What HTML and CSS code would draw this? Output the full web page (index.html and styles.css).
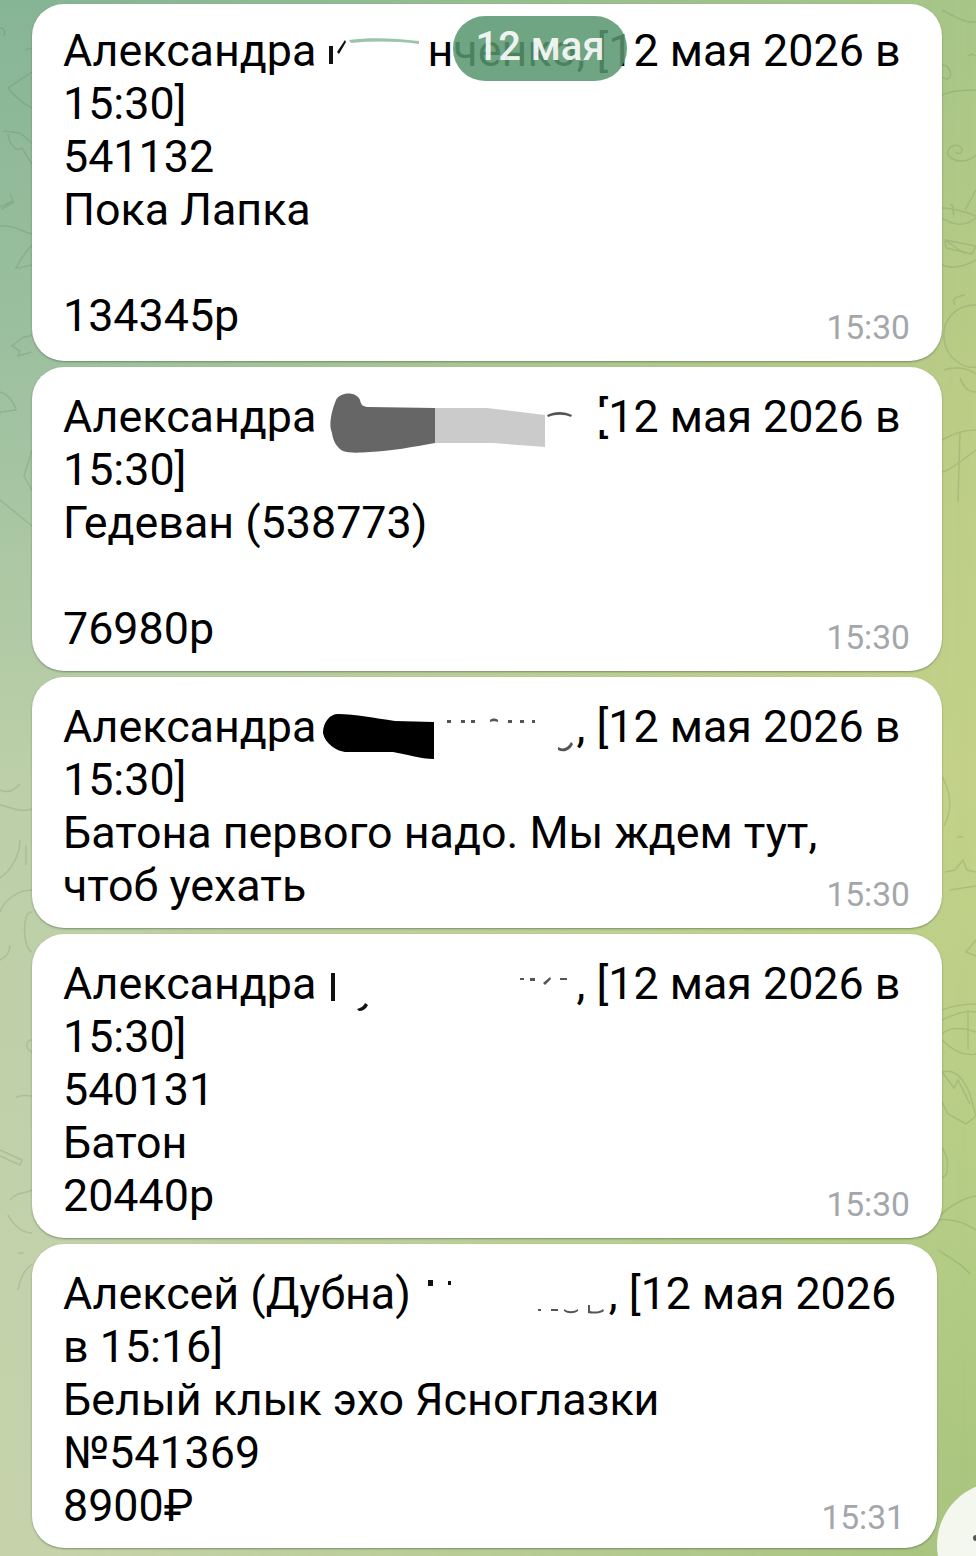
FILE: index.html
```html
<!DOCTYPE html>
<html lang="ru">
<head>
  <meta charset="UTF-8" />
  <title>Чат</title>
  <link rel="stylesheet" href="styles.css">
</head>
<body>
  <div class="chat">
    <svg class="doodles" viewBox="0 0 976 1556" aria-hidden="true">
      <!-- left strip, top to bottom -->
      <path d="M0 28c5 0 6 6 3 8M25 50c3-2 7-2 8 0M32 72L8 88c6 8 16 16 24 20M3 131l17 2 12 10M8 134c2 12 8 18 14 14l10 16M0 207l12-6-10 8 12-7-4-8M0 226c12-2 22 6 32 8M32 245c-8 8-12 16-16 23 6 0 10-2 16-3M32 335l-10 3-10 8 8 5-2 5 14-4M0 392c8 2 14 10 16 18l-16 2-2 12M32 450l-8 26 8 14M0 500l32 26"/>
      <path d="M0 790c8 4 14 0 20-6M0 805c10 2 22 8 32 4M20 840c0 14-8 30-20 38M26 845v20M0 912c4-12 18-22 32-22M32 912c-10-2-10 36 0 40M0 960c6-2 10-8 10-15M32 1040c-6 0-8 8 0 12M16 1098c4-4 10-2 16-2M0 1150l22 10-2 5-20-9M10 1200c6-8 14-6 22-10M8 1215c8 14 16 18 24 18M18 1253h6M18 1290c2-12 6-20 14-26"/>
      <!-- right strip, top to bottom -->
      <path d="M942 10c12 6 24 14 34 12M968 56c2-2 6-2 7 0M942 65c6 0 10 6 8 12-2 3-6 2-8 0M942 95c14-6 24-4 34-5M976 155c-8 8-22 8-28 0-2-8 10-14 14-6 1 4-4 6-6 3M976 190l-11 20M950 205c4-2 2 6 4 10M942 208c12 0 24 4 34 8M942 218c12 8 24 8 34 0M945 240l31 6-4 8-26-6zM945 240l20 14M942 265c10 4 22 2 34-5"/>
      <path d="M976 305c-20 0-34 14-32 34 2 18 18 30 32 28M955 305c-4-6 0-8 10-10M944 370c10-4 24-2 32 4M960 378c4 10 8 14 16 14M942 440c10-6 22-10 34-10M960 432l-2 70M942 472c10-2 22-14 34-22"/>
      <path d="M942 776c8 16 12 30 2 50M957 838c2-2 5-2 6 0M945 872l10-2 8-10 4 10 9 2M950 890l26-4M976 940l-10 12 10 4M942 1010c10-4 24-6 34-6M942 1020c12-6 24-10 34-8M942 1034c8-8 24-6 34-2M942 1040c12 12 24 16 34 14M968 1010v40M942 1072c14-4 22 8 28 22l6 22-10 8-18-10-8-16M942 1072l12 16 4-8 12 24M938 1145c8 4 12 18 8 30l-8 6M936 1220c10-12 26-22 40-24M936 1220c14-2 28 2 40 10M938 1250c12 8 24 14 32 24"/>
    </svg>

    <div class="bubble bubble-first">
      Александра <svg class="blot blot-a" viewBox="2 0 100 53" aria-hidden="true"><path class="ink" d="M4 22h4v18H4zM12 28l8-12 1 2-7 12z"/><path class="smear" d="M24 16c20-3 46-2 70 1v3c-24-3-46-3-68-1z"/></svg>нченко, [12 мая 2026 в<br>
      15:30]<br>
      541132<br>
      Пока Лапка<br>
      <br>
      134345р
      <span class="time">15:30</span>
    </div>

    <div class="bubble">
      Александра <svg class="blot blot-b" viewBox="1 0 269 53" aria-hidden="true"><path class="gray-light" d="M109 18h52l58 7v32l-52-4h-58z"/><path class="gray-dark" d="M6 43C2 34 6 20 10 10c4-8 20-9 24 0 1 5 3 7 9 7l66 1v35c-22 4-44 8-65 9-12 1-22 1-27-1-6-3-10-10-11-18z"/><path class="fragment" d="M221 25c8-4 17-4 25 0l-1 2c-7-3-15-3-23 0z"/><rect class="patch" x="270" y="17" width="12" height="23"/></svg>[12 мая 2026 в<br>
      15:30]<br>
      Гедеван (538773)<br>
      <br>
      76980р
      <span class="time">15:30</span>
    </div>

    <div class="bubble">
      Александра <svg class="blot blot-c" viewBox="1 0 249 53" aria-hidden="true"><path class="black" d="M-3 33C-3 22 4 14 12 14c18 0 36 4 57 7l39 1v37c-14 0-28-5-41-7l-48 0c-8-1-20-8-22-19z"/><path class="fragment" d="M121 20h4v3h-4zM135 20h4v3h-4zM145 20h4v3h-4zM164 20c2-2 6-2 8 0v2c-2-1-6-1-8 0zM182 20h4v3h-4zM194 20h4v3h-4zM206 20h3v3h-3zM232 47c5 3 10 1 13-5l2 2c-3 7-10 9-15 6z"/></svg>, [12 мая 2026 в<br>
      15:30]<br>
      Батона первого надо. Мы ждем тут,<br>
      чтоб уехать
      <span class="time">15:30</span>
    </div>

    <div class="bubble">
      Александра <svg class="blot blot-d" viewBox="1 0 249 53" aria-hidden="true"><path class="ink" d="M5 16h4v28H5zM31 52c4-1 7-3 8-6l3 2c-2 4-5 6-9 6z"/><path class="fragment" d="M194 21h4v2h-4zM204 21h5v3h-5zM217 26l7-6 1 2-6 6zM234 21h7v2h-7z"/></svg>, [12 мая 2026 в<br>
      15:30]<br>
      540131<br>
      Батон<br>
      20440р
      <span class="time">15:30</span>
    </div>

    <div class="bubble bubble-narrow">
      Алексей (Дубна) <svg class="blot blot-e" viewBox="0 0 187 53" aria-hidden="true"><path class="ink" d="M6 13h5v6H6zM26 14h3v4h-3z"/><path class="fragment" d="M116 42h3v2h-3zM129 42h7v2h-7zM142 42c4 3 10 3 14 0v2c-4 3-10 3-14 0zM166 38h2v6c4 1 10 1 13-2l1 2c-4 3-11 3-16 2z"/></svg>, [12 мая 2026<br>
      в 15:16]<br>
      Белый клык эхо Ясноглазки<br>
      №541369<br>
      8900₽
      <span class="time">15:31</span>
    </div>

    <div class="date-pill">12 мая</div>

    <div class="scroll-btn"></div>
  </div>
</body>
</html>
```

FILE: styles.css
```css
body {
  margin: 0;
  font-family: Roboto, "Noto Sans", sans-serif;
  color: #000;
}

.chat {
  position: relative;
  height: 1556px;
  box-sizing: border-box;
  padding: 4px 34px 0 32px;
  display: flex;
  flex-direction: column;
  gap: 6px;
  overflow: hidden;
  background: linear-gradient(180deg, #a8c688 0, #bccd85 26%, #c4d288 50%, #b5cd85 78%, #a8c47e 100%);
}

/* left side of the wallpaper goes from teal to pale green */
.chat::before {
  content: "";
  position: absolute;
  top: 0;
  left: 0;
  width: 100%;
  height: 100%;
  background: linear-gradient(180deg, #86b596 0, #a0c2a0 26%, #bccfa8 50%, #c6d3aa 100%);
  -webkit-mask-image: linear-gradient(90deg, #000 0, #000 5%, transparent 100%);
  mask-image: linear-gradient(90deg, #000 0, #000 5%, transparent 100%);
}

.doodles {
  position: absolute;
  top: 0;
  left: 0;
  width: 976px;
  height: 1556px;
  fill: none;
  stroke: rgba(60, 100, 70, 0.16);
  stroke-width: 1.5;
}

.bubble {
  position: relative;
  box-sizing: border-box;
  width: 910px;
  padding: 23px 32px 16px 31px;
  background: #fff;
  border-radius: 32px;
  box-shadow: 0 1px 2px rgba(60, 80, 60, 0.5);
  font-size: 44.8px;
  line-height: 53px;
  white-space: nowrap;
}

.bubble-first {
  padding-top: 20px;
  padding-bottom: 19px;
}

.bubble-narrow {
  width: 905px;
}

.time {
  position: absolute;
  right: 32px;
  bottom: 13px;
  font-size: 33.6px;
  line-height: 40px;
  color: #a3a7ab;
}

.bubble-narrow .time {
  bottom: 10px;
}

.blot {
  position: relative;
  height: 53px;
  overflow: visible;
  vertical-align: top;
}

.blot-a { width: 100px; }
.blot-b { width: 269px; z-index: 1; }
.blot-c { width: 249px; }
.blot-d { width: 249px; }
.blot-e { width: 187px; }

.ink { fill: #111; }
.smear { fill: #9cc4ac; }
.fragment { fill: #555; }
.gray-dark { fill: #666; }
.gray-light { fill: #cbcbcb; }
.black { fill: #000; }
.patch { fill: #fff; }

.date-pill {
  position: absolute;
  top: 16px;
  left: 453px;
  z-index: 2;
  width: 174px;
  height: 65px;
  border-radius: 32px;
  background: rgba(88, 150, 112, 0.86);
  color: rgba(255, 255, 255, 0.9);
  font-size: 40px;
  font-weight: 500;
  line-height: 62px;
  text-align: center;
}

.scroll-btn {
  position: absolute;
  top: 1482px;
  left: 937px;
  width: 126px;
  height: 126px;
  border-radius: 50%;
  background: #f3f7ee;
}

.scroll-btn::before {
  content: "";
  position: absolute;
  top: 53px;
  left: 36px;
  width: 6px;
  height: 6px;
  border-radius: 50%;
  background: #555;
}
```
